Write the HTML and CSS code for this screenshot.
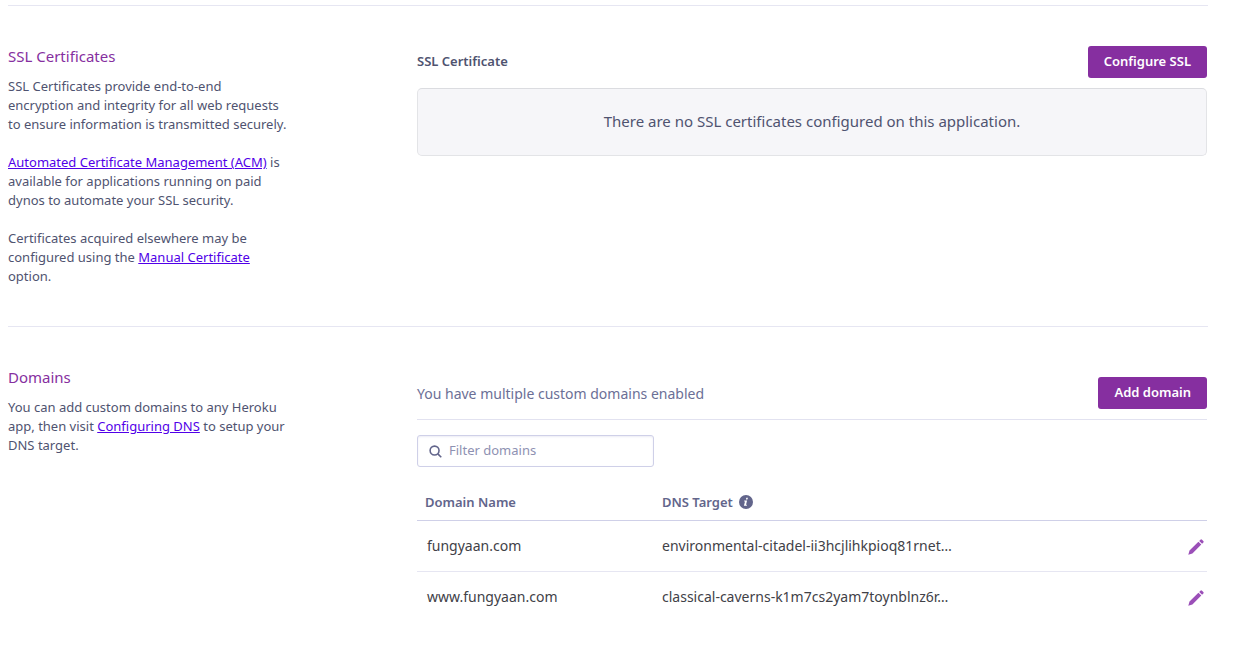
FILE: index.html
```html
<!DOCTYPE html>
<html lang="en">
<head>
<meta charset="utf-8">
<meta name="viewport" content="width=device-width, initial-scale=1">
<title>Application settings</title>
<link rel="stylesheet" href="styles.css">
</head>
<body>
<main class="settings">
  <section class="section">
    <div class="about">
      <h2 class="about-title">SSL Certificates</h2>
      <p class="about-text">SSL Certificates provide end-to-end encryption and integrity for all web requests to ensure information is transmitted securely.</p>
      <p class="about-text"><a class="link" href="#acm">Automated Certificate Management (ACM)</a> is available for applications running on paid dynos to automate your SSL security.</p>
      <p class="about-text">Certificates acquired elsewhere may be configured using the <a class="link" href="#manual">Manual Certificate</a> option.</p>
    </div>
    <div class="panel">
      <div class="panel-head">
        <h3 class="panel-title">SSL Certificate</h3>
        <button class="button" type="button">Configure SSL</button>
      </div>
      <p class="empty">There are no SSL certificates configured on this application.</p>
    </div>
  </section>

  <section class="section">
    <div class="about">
      <h2 class="about-title">Domains</h2>
      <p class="about-text">You can add custom domains to any Heroku app, then visit <a class="link" href="#dns">Configuring DNS</a> to setup your DNS target.</p>
    </div>
    <div class="panel">
      <div class="panel-head panel-head-ruled">
        <p class="status">You have multiple custom domains enabled</p>
        <button class="button" type="button">Add domain</button>
      </div>
      <label class="filter">
        <svg class="filter-icon" viewBox="0 0 14 14" aria-hidden="true"><circle cx="6" cy="6" r="4.8"/><path d="M9.5 9.5L13.2 13.2"/></svg>
        <input class="filter-input" type="text" placeholder="Filter domains" aria-label="Filter domains">
      </label>
      <table class="domains">
        <thead>
          <tr>
            <th class="name">Domain Name</th>
            <th class="target"><span class="with-info">DNS Target
              <svg class="info-icon" viewBox="0 0 14 14" aria-hidden="true"><circle cx="7" cy="7" r="7" fill="#62658b"/><path d="M7.3 2.8h1.6l-.4 1.6H6.9zM5.3 5.6h2.8L7 9.7h1l-.2 1H4.9l1.1-4.1h-.9z" fill="#fff"/></svg></span></th>
            <th class="action" aria-label="Edit"></th>
          </tr>
        </thead>
        <tbody>
          <tr>
            <td class="name">fungyaan.com</td>
            <td class="target">environmental-citadel-ii3hcjlihkpioq81rnet…</td>
            <td class="action"><button class="edit" type="button" aria-label="Edit fungyaan.com"><svg class="edit-icon" viewBox="0 0 16 16" aria-hidden="true"><path d="M.3 15.7l1.2-4.1 8.9-8.9 2.9 2.9-8.9 8.9zM11.2 1.9l1.2-1.2q.8-.8 1.6 0l1.3 1.3q.8.8 0 1.6l-1.2 1.2z"/></svg></button></td>
          </tr>
          <tr>
            <td class="name">www.fungyaan.com</td>
            <td class="target">classical-caverns-k1m7cs2yam7toynblnz6r…</td>
            <td class="action"><button class="edit" type="button" aria-label="Edit www.fungyaan.com"><svg class="edit-icon" viewBox="0 0 16 16" aria-hidden="true"><path d="M.3 15.7l1.2-4.1 8.9-8.9 2.9 2.9-8.9 8.9zM11.2 1.9l1.2-1.2q.8-.8 1.6 0l1.3 1.3q.8.8 0 1.6l-1.2 1.2z"/></svg></button></td>
          </tr>
        </tbody>
      </table>
    </div>
  </section>
</main>
</body>
</html>
```

FILE: styles.css
```css
* { box-sizing: border-box; }

body {
  margin: 0;
  background: #fff;
  color: #4f5370;
  font: 13px/19px "Noto Sans", "Open Sans", sans-serif;
}

h2, h3, p { margin: 0; }

.settings { padding: 5px 27px 0 8px; }

.section {
  display: grid;
  grid-template-columns: 34fr 66fr;
  padding: 40px 0;
  border-top: 1px solid #e6e6f2;
}

.about {
  display: flex;
  flex-direction: column;
  gap: 19px;
  max-width: 280px;
}

.about-title {
  margin-bottom: -9px;
  color: #862fa0;
  font-size: 15px;
  font-weight: 400;
  line-height: 21px;
}

.link { color: #5100e8; text-decoration: underline; }

.panel { padding: 0 1px; }

.panel-head {
  display: flex;
  align-items: center;
  justify-content: space-between;
  padding-bottom: 10px;
}

.panel-head-ruled {
  padding-top: 10px;
  border-bottom: 1px solid #e2e2f0;
}

.panel-title { padding-bottom: 2px; font-size: 13px; font-weight: 600; }

.status { color: #6b6f96; font-size: 14px; }

.button {
  height: 32px;
  padding: 0 16px 2px;
  border: 0;
  border-radius: 3px;
  background: #862fa0;
  color: #fff;
  font: inherit;
  font-weight: 600;
}

.empty {
  padding: 22px 16px 24px;
  border: 1px solid #e3e4e7;
  border-top-color: #dbdce0;
  border-radius: 5px;
  background: #f6f6f9;
  font-size: 15px;
  line-height: 20px;
  text-align: center;
}

.filter {
  display: flex;
  align-items: center;
  gap: 7px;
  width: 30%;
  height: 32px;
  margin: 15px 0 16px;
  padding: 0 11px;
  border: 1px solid #cfd0e8;
  border-radius: 3px;
  box-shadow: inset 0 1px 2px #ececf5;
}

.filter-icon {
  flex: none;
  width: 13px;
  height: 13px;
  fill: none;
  stroke: #62658b;
  stroke-width: 1.7;
}

.filter-input {
  width: 100%;
  min-width: 0;
  padding: 0 0 2px;
  border: 0;
  outline: 0;
  background: none;
  color: #4f5370;
  font: inherit;
}

.filter-input::placeholder { color: #8e91b2; opacity: 1; }

.domains {
  width: 100%;
  border-collapse: collapse;
  table-layout: fixed;
  text-align: left;
}

.domains th {
  height: 37px;
  padding: 2px 8px 0;
  border-bottom: 1px solid #cfd0e8;
  color: #62658b;
  font-weight: 600;
}

.domains td {
  height: 51px;
  padding: 0 8px 0 10px;
  color: #414147;
  font-size: 14px;
}

.domains tr + tr td { border-top: 1px solid #e6e6f2; }

.domains .name { width: 30%; }
.domains .target { padding-left: 8px; }

.domains .action {
  width: 64px;
  padding: 0 3px 0 0;
  text-align: right;
}

.with-info { display: inline-flex; align-items: center; gap: 6px; }

.info-icon { width: 14px; height: 14px; }

.edit {
  display: inline-flex;
  padding: 0;
  border: 0;
  background: none;
  vertical-align: middle;
}

.edit-icon { width: 16px; height: 16px; fill: #9b4fb8; }
```
